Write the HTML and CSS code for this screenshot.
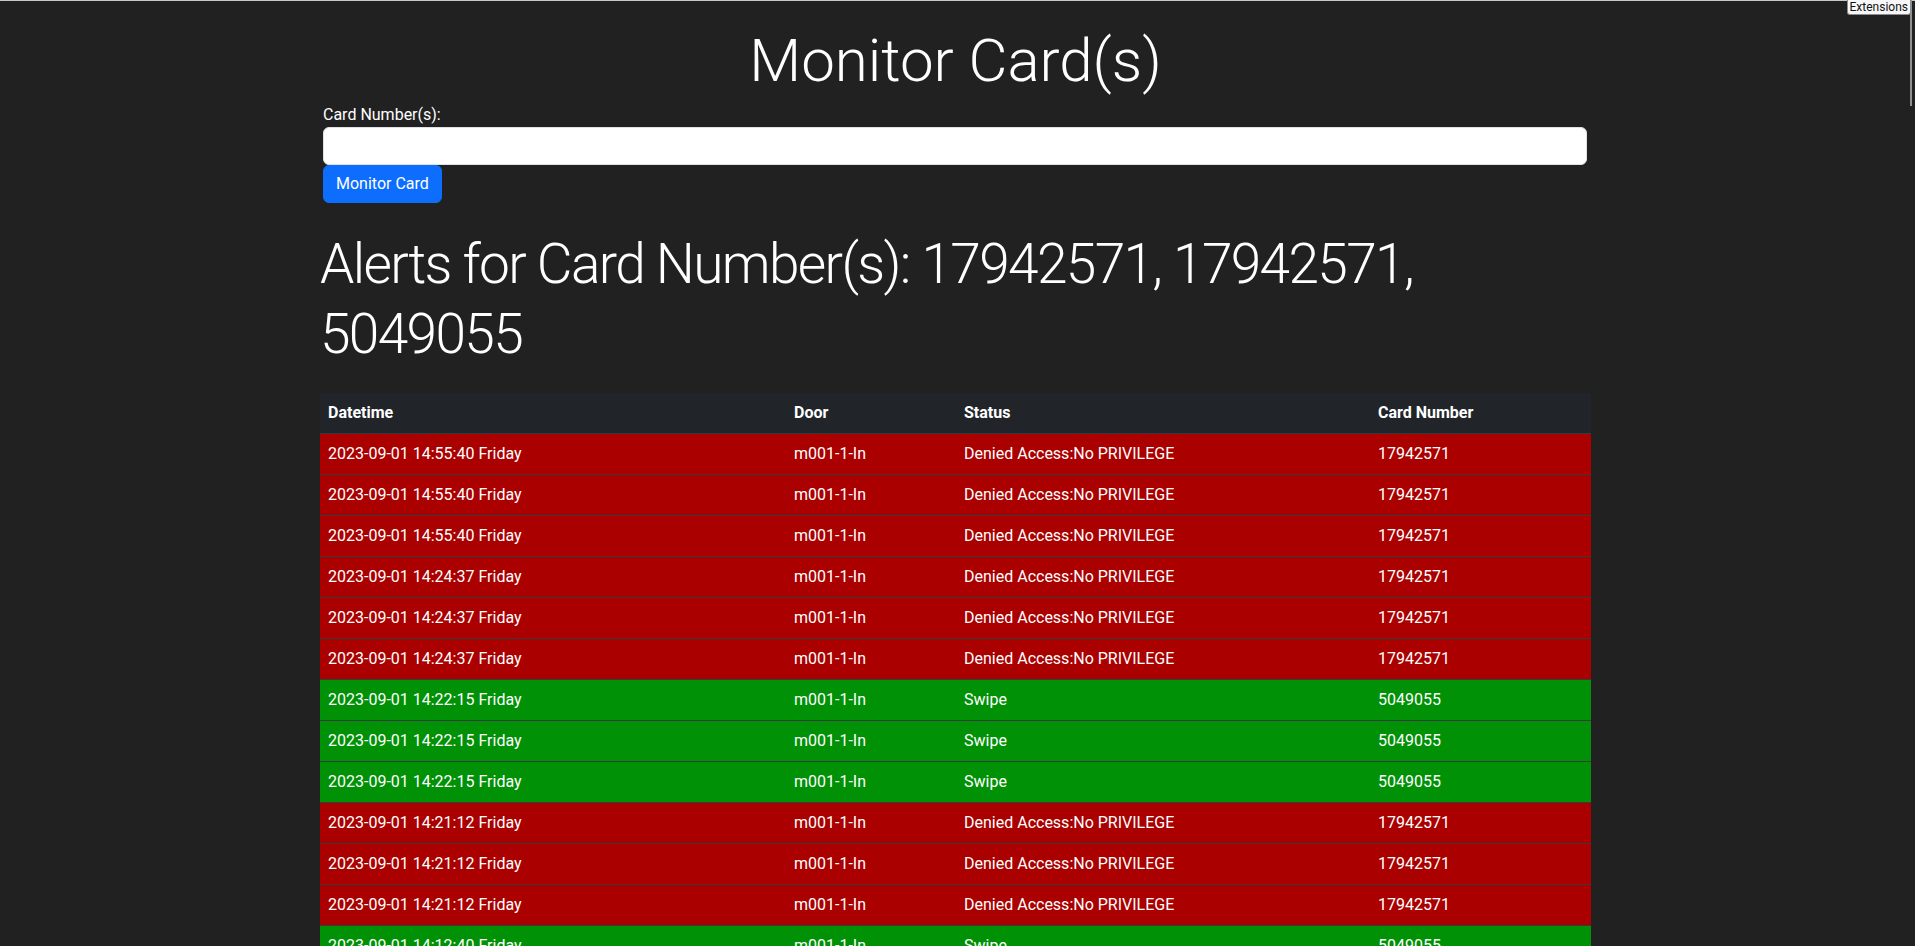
FILE: index.html
```html
<!DOCTYPE html>
<html lang="en">
<head>
<meta charset="utf-8">
<title>Monitor Card(s)</title>
<link rel="stylesheet" href="styles.css">
</head>
<body>
<div class="tooltip">Extensions</div>
<div class="scroll-thumb"></div>
<main class="container">
  <h1 class="title">Monitor Card(s)</h1>
  <form class="card-form">
    <label class="form-label" for="cards">Card Number(s):</label>
    <input class="form-input" id="cards" type="text">
    <button class="btn" type="button">Monitor Card</button>
  </form>
  <h2 class="alerts-title">Alerts for Card Number(s): 17942571, 17942571, 5049055</h2>
  <table class="alerts">
    <colgroup>
      <col class="c-date"><col class="c-door"><col class="c-status"><col class="c-card">
    </colgroup>
    <thead>
      <tr><th>Datetime</th><th>Door</th><th>Status</th><th>Card Number</th></tr>
    </thead>
    <tbody>
      <tr class="denied"><td>2023-09-01 14:55:40 Friday</td><td>m001-1-In</td><td>Denied Access:No PRIVILEGE</td><td>17942571</td></tr>
      <tr class="denied"><td>2023-09-01 14:55:40 Friday</td><td>m001-1-In</td><td>Denied Access:No PRIVILEGE</td><td>17942571</td></tr>
      <tr class="denied"><td>2023-09-01 14:55:40 Friday</td><td>m001-1-In</td><td>Denied Access:No PRIVILEGE</td><td>17942571</td></tr>
      <tr class="denied"><td>2023-09-01 14:24:37 Friday</td><td>m001-1-In</td><td>Denied Access:No PRIVILEGE</td><td>17942571</td></tr>
      <tr class="denied"><td>2023-09-01 14:24:37 Friday</td><td>m001-1-In</td><td>Denied Access:No PRIVILEGE</td><td>17942571</td></tr>
      <tr class="denied"><td>2023-09-01 14:24:37 Friday</td><td>m001-1-In</td><td>Denied Access:No PRIVILEGE</td><td>17942571</td></tr>
      <tr class="swipe"><td>2023-09-01 14:22:15 Friday</td><td>m001-1-In</td><td>Swipe</td><td>5049055</td></tr>
      <tr class="swipe"><td>2023-09-01 14:22:15 Friday</td><td>m001-1-In</td><td>Swipe</td><td>5049055</td></tr>
      <tr class="swipe"><td>2023-09-01 14:22:15 Friday</td><td>m001-1-In</td><td>Swipe</td><td>5049055</td></tr>
      <tr class="denied"><td>2023-09-01 14:21:12 Friday</td><td>m001-1-In</td><td>Denied Access:No PRIVILEGE</td><td>17942571</td></tr>
      <tr class="denied"><td>2023-09-01 14:21:12 Friday</td><td>m001-1-In</td><td>Denied Access:No PRIVILEGE</td><td>17942571</td></tr>
      <tr class="denied"><td>2023-09-01 14:21:12 Friday</td><td>m001-1-In</td><td>Denied Access:No PRIVILEGE</td><td>17942571</td></tr>
      <tr class="swipe"><td>2023-09-01 14:12:40 Friday</td><td>m001-1-In</td><td>Swipe</td><td>5049055</td></tr>
      <tr class="swipe"><td>2023-09-01 14:12:40 Friday</td><td>m001-1-In</td><td>Swipe</td><td>5049055</td></tr>
    </tbody>
  </table>
</main>
</body>
</html>
```
FILE: styles.css
```css
html, body {
  overflow: hidden;
}

body {
  margin: 0;
  padding-right: 4px;
  background: #212121;
  color: #fff;
  font-family: Roboto, "Liberation Sans", sans-serif;
  font-size: 16px;
  line-height: 24px;
  border-top: 1px solid #c8c8c8;
}

.tooltip {
  position: absolute;
  top: 0;
  right: 4px;
  padding: 0 2px;
  background: #f7f7f9;
  color: #111;
  border: 1px solid #8c8c8c;
  border-top: none;
  border-radius: 0 0 3px 3px;
  font-size: 12px;
  line-height: 14px;
  z-index: 2;
}

.scroll-thumb {
  position: absolute;
  top: 0;
  right: 3px;
  width: 2px;
  height: 106px;
  background: #8f8f8f;
  z-index: 1;
}

.container {
  width: 1271px;
  margin: 0 auto;
}

.title {
  margin: 0;
  padding-top: 24px;
  font-size: 60px;
  font-weight: 300;
  line-height: 72px;
  text-align: center;
}

.card-form {
  display: flex;
  flex-direction: column;
  align-items: flex-start;
  padding: 6px 4px 0 3px;
}

.form-label {
  display: block;
  line-height: 24px;
}

.form-input {
  align-self: stretch;
  box-sizing: border-box;
  height: 38px;
  margin: 0;
  padding: 6px 12px;
  background: #fff;
  border: 1px solid #dee2e6;
  border-radius: 6px;
  font: inherit;
}

.btn {
  box-sizing: border-box;
  height: 38px;
  margin: 0;
  padding: 6px 12px;
  background: #0d6efd;
  border: 1px solid #0d6efd;
  border-radius: 6px;
  color: #fff;
  font: inherit;
  line-height: 24px;
}

.alerts-title {
  margin: 26px 0 24px;
  font-size: 55px;
  font-weight: 300;
  line-height: 70px;
  letter-spacing: -1.65px;
}

.alerts {
  width: 100%;
  border-collapse: collapse;
  table-layout: fixed;
}

.c-date { width: 466px; }
.c-door { width: 170px; }
.c-status { width: 414px; }
.c-card { width: 221px; }

.alerts th,
.alerts td {
  padding: 8px;
  text-align: left;
  border-bottom: 1px solid #373b3e;
  white-space: nowrap;
}

.alerts th {
  background: #212529;
  font-weight: 700;
}

.denied td {
  background: #aa0000;
}

.swipe td {
  background: #009106;
}
```
